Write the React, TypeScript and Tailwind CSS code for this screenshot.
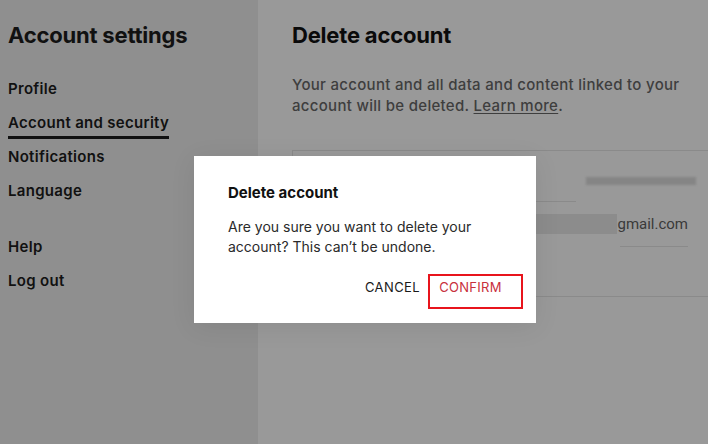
import React from "react";

const font = { fontFamily: "Inter, 'Noto Sans', 'Liberation Sans', sans-serif" };

export default function App() {
  return (
    <div className="relative w-[708px] h-[444px] overflow-hidden flex" style={font}>
      {/* Sidebar */}
      <aside className="w-[258px] h-full bg-[#8f8f8f] pl-2 pt-[22px] text-[#111]">
        <h1 className="text-[22px] leading-[26px] font-bold tracking-[-0.2px]">Account settings</h1>
        <nav className="mt-[29px] flex flex-col text-[15px] font-semibold tracking-[0.3px]">
          <a className="h-[34px] leading-[24px]">Profile</a>
          <a className="h-[34px] leading-[24px]">
            <span className="inline-block border-b-[3px] border-[#111] pb-[1px]">Account and security</span>
          </a>
          <a className="h-[34px] leading-[24px]">Notifications</a>
          <a className="h-[34px] leading-[24px]">Language</a>
          <a className="h-[34px] leading-[24px] mt-[22px]">Help</a>
          <a className="h-[34px] leading-[24px]">Log out</a>
        </nav>
      </aside>

      {/* Main */}
      <main className="flex-1 h-full bg-[#999999] pl-[34px] pt-[22px]">
        <h2 className="text-[22px] leading-[26px] font-bold text-[#0a0a0a] tracking-[-0.2px]">Delete account</h2>
        <p className="mt-[26px] text-[15px] leading-[21px] font-medium text-[#3e3e3e] tracking-[0.3px] w-[410px]">
          Your account and all data and content linked to your account will be deleted.{" "}
          <span className="underline underline-offset-2">Learn more</span>.
        </p>
        <div className="mt-[34px] h-[147px] border-t border-l border-b border-[#8a8a8a] relative">
          <div className="h-[50px] flex items-center justify-end pr-[12px] pt-[10px]">
            <div className="w-[110px] h-[8px] bg-[#858585] blur-[1px]" />
          </div>
          <div className="w-[283px] border-t border-[#8a8a8a]" />
          <div className="h-[44px] flex items-center justify-end pr-[20px]">
            <div className="w-[84px] h-[20px] bg-[#8c8c8c]" />
            <span className="text-[15px] text-[#3a3a3a]" style={{ fontFamily: "Roboto, 'Liberation Sans', sans-serif" }}>gmail.com</span>
          </div>
          <div className="flex justify-end pr-[20px]">
            <div className="w-[68px] border-t border-[#8a8a8a]" />
          </div>
        </div>
      </main>

      {/* Modal */}
      <div className="absolute left-[194px] top-[156px] w-[342px] h-[167px] bg-white shadow-[0_4px_24px_rgba(0,0,0,0.08)] pl-[34px] pr-[13px] pt-[27px]">
        <h3 className="text-[15px] leading-[20px] font-bold text-[#111]">Delete account</h3>
        <p className="mt-[14px] text-[14px] leading-[20px] text-[#2a2a2a] font-normal w-[270px]">
          Are you sure you want to delete your account? This can’t be undone.
        </p>
        <div className="mt-[17px] flex justify-end items-center">
          <button className="text-[13px] tracking-[0.4px] text-[#1a1a1a] mr-[8px] mb-[8px]">CANCEL</button>
          <button className="w-[95px] h-[35px] border-2 border-[#e8141c] text-[13px] tracking-[0.3px] text-[#c8303c] pr-[10px] pb-[8px]">CONFIRM</button>
        </div>
      </div>
    </div>
  );
}
